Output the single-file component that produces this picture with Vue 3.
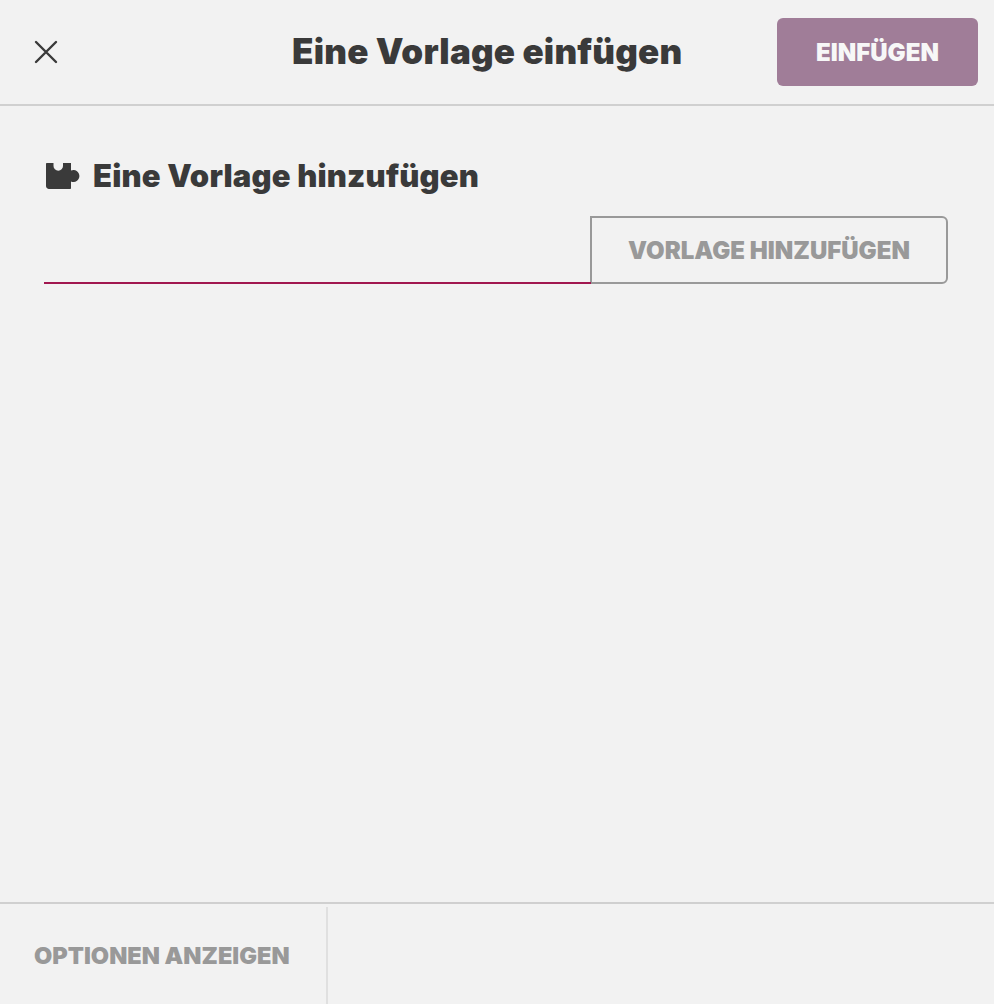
<script setup>
</script>

<template>
  <div class="dialog">
    <header class="header">
      <button class="close" aria-label="Schließen">
        <svg width="24" height="24" viewBox="0 0 24 24" fill="none">
          <path d="M2 2 22 22M22 2 2 22" stroke="#3a3a3a" stroke-width="2.400" stroke-linecap="round" />
        </svg>
      </button>
      <h1 class="title">Eine Vorlage einfügen</h1>
      <button class="primary">EINFÜGEN</button>
    </header>
    <main class="body">
      <h2 class="section">
        <svg class="puzzle" width="35" height="26" viewBox="0 0 35 26">
          <path fill="#3a3a3a" d="M1 0H7.500V3A4.750 4.750 0 0 0 17 3V0H25V7.500A6 6 0 1 1 25 18.500V25C25 25.600 24.600 26 24 26H3C1.400 26 0 24.600 0 23V1C0 .4.400 0 1 0Z" />
        </svg>
        <span class="section-text">Eine Vorlage hinzufügen</span>
      </h2>
      <div class="row">
        <input class="field" type="text" aria-label="Eine Vorlage hinzufügen" />
        <button class="secondary">VORLAGE HINZUFÜGEN</button>
      </div>
    </main>
    <footer class="footer">
      <button class="options">OPTIONEN ANZEIGEN</button>
    </footer>
  </div>
</template>

<style scoped>
.dialog {
  width: 994px;
  height: 1004px;
  display: flex;
  flex-direction: column;
  background: #f2f2f2;
  color: #3a3a3a;
  font-family: Inter, "Liberation Sans", sans-serif;
  overflow: hidden;
}
button {
  font-family: inherit;
  font-weight: 900;
  background: none;
  border: 0;
  padding: 0;
}
.header {
  box-sizing: border-box;
  height: 106px;
  flex: none;
  display: flex;
  align-items: center;
  padding: 0 16px 0 34px;
  border-bottom: 2px solid #d0d0d0;
}
.close {
  width: 24px;
  height: 24px;
  display: flex;
}
.title {
  margin: 0 0 2px 234px;
  font-size: 35px;
  line-height: 40px;
  letter-spacing: 0.2px;
  font-weight: 900;
}
.primary {
  margin-left: auto;
  width: 201px;
  height: 68px;
  border-radius: 6px;
  background: #a07d98;
  color: #f7f7f7;
  font-size: 24px;
}
.body {
  flex: 1;
  padding: 55px 46px 0 44px;
}
.section {
  display: flex;
  align-items: center;
  gap: 12px;
  margin: 0;
  padding-left: 2px;
  height: 30px;
  font-size: 31px;
  letter-spacing: 0.18px;
  font-weight: 900;
}
.section-text {
  margin-bottom: 2px;
}
.row {
  display: flex;
  margin-top: 25px;
}
.field {
  flex: 1;
  position: relative;
  height: 68px;
  box-sizing: border-box;
  border: 0;
  border-bottom: 2px solid #a1174f;
  background: transparent;
  outline: 0;
}
.secondary {
  box-sizing: border-box;
  width: 358px;
  margin-left: -1px;
  height: 68px;
  border: 2px solid #999;
  border-radius: 0 6px 6px 0;
  color: #999;
  font-size: 24px;
}
.footer {
  box-sizing: border-box;
  flex: none;
  height: 102px;
  border-top: 2px solid #d0d0d0;
  padding-top: 3px;
  display: flex;
}
.options {
  width: 328px;
  border-right: 2px solid #e0e0e0;
  color: #999;
  font-size: 23.600px;
  text-align: left;
  padding-left: 34px;
}
</style>
